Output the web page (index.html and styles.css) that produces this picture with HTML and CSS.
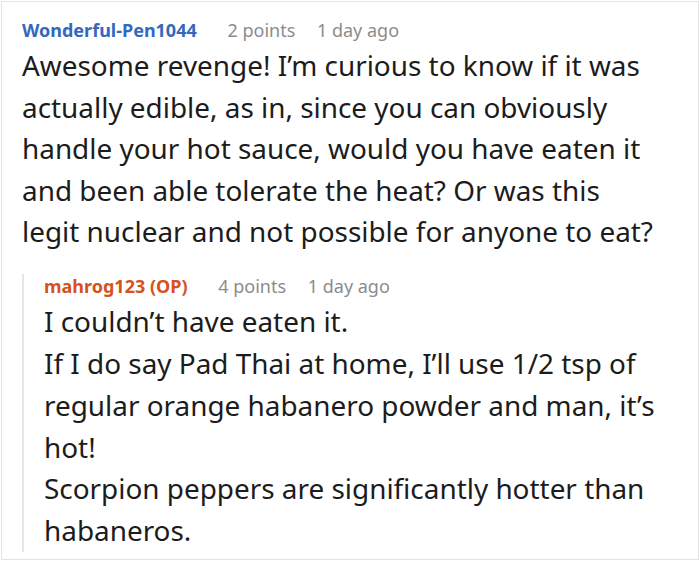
FILE: index.html
```html
<!DOCTYPE html>
<html>
<head>
<meta charset="utf-8">
<link rel="stylesheet" href="styles.css">
</head>
<body>
<div class="thread">
  <div class="meta">
    <span class="author">Wonderful-Pen1044</span>
    <span class="points">2 points</span>
    <span class="time">1 day ago</span>
  </div>
  <div class="body">
    <p>Awesome revenge! I’m curious to know if it was actually edible, as in, since you can obviously handle your hot sauce, would you have eaten it and been able tolerate the heat? Or was this legit nuclear and not possible for anyone to eat?</p>
  </div>
  <div class="reply">
    <div class="meta">
      <span class="author op">mahrog123 (OP)</span>
      <span class="points">4 points</span>
      <span class="time">1 day ago</span>
    </div>
    <div class="body reply-body">
      <p>I couldn’t have eaten it.</p>
      <p>If I do say Pad Thai at home, I’ll use 1/2 tsp of regular orange habanero powder and man, it’s hot!</p>
      <p>Scorpion peppers are significantly hotter than habaneros.</p>
    </div>
  </div>
</div>
</body>
</html>
```

FILE: styles.css
```css
html, body {
  margin: 0;
  padding: 0;
  background: #ffffff;
}
body {
  padding: 1px;
  font-family: "Noto Sans", "Open Sans", sans-serif;
}
.thread {
  border: 1px solid #e4e4e4;
  padding: 16px 38px 16px 20px;
}
.meta {
  font-size: 18px;
  line-height: 24px;
  height: 24px;
  white-space: nowrap;
}
.author {
  font-weight: 700;
  color: #3468bd;
  margin-right: 26px;
}
.author.op {
  color: #d6521d;
}
.points {
  color: #8c8c8c;
  margin-right: 17px;
}
.time {
  color: #8c8c8c;
}
.body {
  margin-top: 3.4px;
  font-size: 27.9px;
  line-height: 41.5px;
  color: #1c1c1c;
}
.body p {
  margin: 0;
}
.reply {
  margin-top: 30.1px;
  border-left: 2px solid #e6e6e6;
  padding-left: 20px;
}
.reply .meta {
  margin-top: -9px;
}
.reply-body {
  margin-top: 3.3px;
  line-height: 41.8px;
  margin-bottom: -9.1px;
}
```
